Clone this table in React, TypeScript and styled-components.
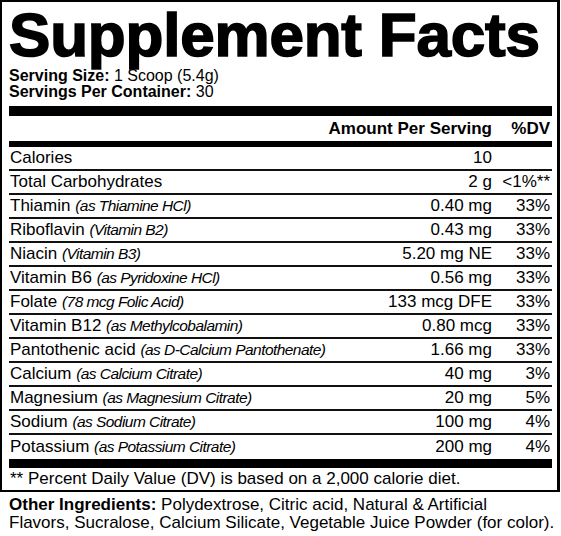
import React from 'react';
import styled, { createGlobalStyle } from 'styled-components';

const GlobalStyle = createGlobalStyle`
  html, body {
    margin: 0;
    padding: 0;
    background: #ffffff;
  }
  body {
    font-family: 'Liberation Sans', Arial, sans-serif;
    color: #000000;
  }
`;

const Page = styled.div`
  width: 561px;
  height: 536px;
  overflow: hidden;
  background: #ffffff;
`;

const Label = styled.div`
  width: 560px;
  box-sizing: border-box;
  border: 2px solid #000;
  border-right-width: 3px;
  padding: 0 5px 0 7px;
`;

const Title = styled.h1`
  margin: 3px 0 0 0;
  height: 63px;
  font-size: 62px;
  line-height: 60px;
  font-weight: 900;
  letter-spacing: -0.2px;
  -webkit-text-stroke: 1.6px #000;
  white-space: nowrap;
`;

const ServingLine = styled.div`
  font-size: 16px;
  line-height: 16px;
  height: 16px;
  white-space: nowrap;
`;

const Strong = styled.b`
  font-weight: 700;
`;

const Bar = styled.div<{ $h: number; $mt?: number }>`
  height: ${p => p.$h}px;
  margin-top: ${p => p.$mt ?? 0}px;
  background: #000;
`;

const Row = styled.div<{ $last?: boolean; $head?: boolean }>`
  display: grid;
  grid-template-columns: 1fr auto 60px;
  align-items: center;
  height: ${p => (p.$head ? 25 : p.$last ? 24 : 22)}px;
  line-height: ${p => (p.$head ? 25 : 22)}px;
  font-size: 17px;
  font-weight: ${p => (p.$head ? 700 : 400)};
  border-bottom: ${p => (p.$last || p.$head ? 'none' : '2px solid #111')};
  white-space: nowrap;
`;

const Name = styled.span`
  padding-left: 1px;
`;

const Note = styled.i`
  font-size: 15.5px;
  letter-spacing: -0.55px;
`;

const Amount = styled.span`
  text-align: right;
`;

const Dv = styled.span`
  text-align: right;
  padding-right: 2px;
`;

const Footnote = styled.div`
  font-size: 17px;
  line-height: 22px;
  height: 22px;
  padding-left: 1px;
  white-space: nowrap;
`;

const Ingredients = styled.div`
  margin-top: 4px;
  padding-left: 9px;
  font-size: 17px;
  line-height: 17.5px;
  white-space: nowrap;
`;

interface Nutrient {
  name: string;
  note?: string;
  amount: string;
  dv: string;
}

const nutrients: Nutrient[] = [
  { name: 'Calories', amount: '10', dv: '' },
  { name: 'Total Carbohydrates', amount: '2 g', dv: '<1%**' },
  { name: 'Thiamin', note: '(as Thiamine HCl)', amount: '0.40 mg', dv: '33%' },
  { name: 'Riboflavin', note: '(Vitamin B2)', amount: '0.43 mg', dv: '33%' },
  { name: 'Niacin', note: '(Vitamin B3)', amount: '5.20 mg NE', dv: '33%' },
  { name: 'Vitamin B6', note: '(as Pyridoxine HCl)', amount: '0.56 mg', dv: '33%' },
  { name: 'Folate', note: '(78 mcg Folic Acid)', amount: '133 mcg DFE', dv: '33%' },
  { name: 'Vitamin B12', note: '(as Methylcobalamin)', amount: '0.80 mcg', dv: '33%' },
  { name: 'Pantothenic acid', note: '(as D-Calcium Pantothenate)', amount: '1.66 mg', dv: '33%' },
  { name: 'Calcium', note: '(as Calcium Citrate)', amount: '40 mg', dv: '3%' },
  { name: 'Magnesium', note: '(as Magnesium Citrate)', amount: '20 mg', dv: '5%' },
  { name: 'Sodium', note: '(as Sodium Citrate)', amount: '100 mg', dv: '4%' },
  { name: 'Potassium', note: '(as Potassium Citrate)', amount: '200 mg', dv: '4%' },
];

const App: React.FC = () => {
  return (
    <Page>
      <GlobalStyle />
      <Label>
        <Title>Supplement Facts</Title>
        <ServingLine>
          <Strong>Serving Size:</Strong> 1 Scoop (5.4g)
        </ServingLine>
        <ServingLine>
          <Strong>Servings Per Container:</Strong> 30
        </ServingLine>
        <Bar $h={10} $mt={6} />
        <Row $head>
          <span />
          <Amount>Amount Per Serving</Amount>
          <Dv>%DV</Dv>
        </Row>
        <Bar $h={6} />
        {nutrients.map((n, i) => (
          <Row key={n.name} $last={i === nutrients.length - 1}>
            <Name>
              {n.name}
              {n.note && <> <Note>{n.note}</Note></>}
            </Name>
            <Amount>{n.amount}</Amount>
            <Dv>{n.dv}</Dv>
          </Row>
        ))}
        <Bar $h={9} />
        <Footnote>** Percent Daily Value (DV) is based on a 2,000 calorie diet.</Footnote>
      </Label>
      <Ingredients>
        <Strong>Other Ingredients:</Strong> Polydextrose, Citric acid, Natural &amp; Artificial
        <br />
        Flavors, Sucralose, Calcium Silicate, Vegetable Juice Powder (for color).
      </Ingredients>
    </Page>
  );
};

export default App;
